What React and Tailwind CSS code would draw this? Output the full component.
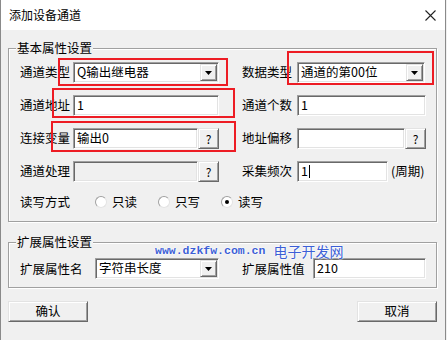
import React from "react";

const sunken =
  "border border-t-[#a0a0a0] border-l-[#a0a0a0] border-r-white border-b-white shadow-[inset_1px_1px_0_#696969,inset_-1px_-1px_0_#e3e3e3]";
const raised =
  "border border-t-[#e3e3e3] border-l-[#e3e3e3] border-r-[#696969] border-b-[#696969] shadow-[inset_1px_1px_0_white,inset_-1px_-1px_0_#a0a0a0] bg-[#f0f0f0]";

function Input({ className = "", value = "", disabled = false, caret = false }) {
  return (
    <div
      className={`h-[21px] flex items-center pl-[3px] ${sunken} ${
        disabled ? "bg-[#f0f0f0]" : "bg-white"
      } ${className}`}
    >
      <span className="leading-none">{value}</span>
      {caret && <span className="w-[1px] h-[13px] bg-black ml-[1px]" />}
    </div>
  );
}

function Combo({ className = "", value }) {
  return (
    <div
      className={`h-[21px] flex items-center justify-between pl-[3px] pr-[1px] bg-white ${sunken} ${className}`}
    >
      <span className="leading-none">{value}</span>
      <div className={`w-[17px] h-[17px] flex items-center justify-center ${raised}`}>
        <svg width="7" height="4" viewBox="0 0 7 4">
          <path d="M0 0h7L3.5 4z" fill="#000" />
        </svg>
      </div>
    </div>
  );
}

function QButton() {
  return (
    <div className={`w-[21px] h-[21px] flex items-center justify-center text-[12px] ${raised}`}>
      ?
    </div>
  );
}

function Radio({ label, checked }) {
  return (
    <div className="w-[63px] flex items-center">
      <div className="w-[12px] h-[12px] rounded-full bg-white border border-[#a0a0a0] border-r-[#e3e3e3] border-b-[#e3e3e3] flex items-center justify-center mr-[5px]">
        {checked && <div className="w-[4px] h-[4px] rounded-full bg-black" />}
      </div>
      <span>{label}</span>
    </div>
  );
}

function Group({ title, className = "", children }) {
  return (
    <div
      className={`border border-[#a0a0a0] shadow-[1px_1px_0_white,inset_1px_1px_0_white] ${className}`}
    >
      <div className="-mt-[9px] ml-[7px] px-[1px] w-fit bg-[#f0f0f0] leading-[16px]">
        {title}
      </div>
      {children}
    </div>
  );
}

function Mark({ left, top, w, h }) {
  return (
    <div
      className="absolute border-2 border-[#ed1c24]"
      style={{ left, top, width: w, height: h }}
    />
  );
}

export default function App() {
  return (
    <div className="w-[447px] h-[340px] bg-[#f0f0f0] relative overflow-hidden text-[12.5px] text-black font-['SimSun','Noto_Sans_CJK_SC',sans-serif]">
      <div className="w-[446px] h-full border-x border-[#8a8a8a] flex flex-col">
        {/* title bar */}
        <div className="h-[30px] bg-white flex items-center justify-between pl-[8px] pr-[9px] text-[12px]">
          <span>添加设备通道</span>
          <svg width="11" height="11" viewBox="0 0 11 11">
            <path d="M0.5 0.5l10 10M10.5 0.5l-10 10" stroke="#222" strokeWidth="1.1" />
          </svg>
        </div>

        <div className="flex-1 pl-[7px] pr-[8px] pt-[18px]">
          <Group title="基本属性设置" className="h-[174px]">
            <div className="flex items-center pl-[11px] mt-[6px]">
              <span className="w-[53px]">通道类型</span>
              <Combo className="w-[146px]" value="Q输出继电器" />
              <span className="w-[55px] ml-[23px]">数据类型</span>
              <Combo className="w-[128px]" value="通道的第00位" />
            </div>
            <div className="flex items-center pl-[11px] mt-[12px]">
              <span className="w-[53px]">通道地址</span>
              <Input className="w-[146px]" value="1" />
              <span className="w-[55px] ml-[23px]">通道个数</span>
              <Input className="w-[129px]" value="1" />
            </div>
            <div className="flex items-center pl-[11px] mt-[12px]">
              <span className="w-[53px]">连接变量</span>
              <Input className="w-[125px]" value="输出0" />
              <QButton />
              <span className="w-[55px] ml-[23px]">地址偏移</span>
              <Input className="w-[108px]" />
              <QButton />
            </div>
            <div className="flex items-center pl-[11px] mt-[12px]">
              <span className="w-[53px]">通道处理</span>
              <Input className="w-[125px]" disabled />
              <QButton />
              <span className="w-[55px] ml-[23px]">采集频次</span>
              <Input className="w-[91px]" value="1" caret />
              <span className="ml-[3px]">(周期)</span>
            </div>
            <div className="flex items-center pl-[11px] mt-[10px] h-[20px]">
              <span className="w-[75px]">读写方式</span>
              <Radio label="只读" />
              <Radio label="只写" />
              <Radio label="读写" checked />
            </div>
          </Group>

          <Group title="扩展属性设置" className="h-[46px] mt-[20px]">
            <div className="flex items-center pl-[11px] mt-[8px]">
              <span className="w-[75px] leading-[15px]">扩展属性名</span>
              <Combo className="w-[124px]" value="字符串长度" />
              <span className="w-[71px] ml-[23px] leading-[15px]">扩展属性值</span>
              <Input className="w-[113px]" value="210" />
            </div>
          </Group>

          <div className="flex justify-between mt-[13px]">
            <div className={`w-[80px] h-[21px] flex items-center justify-center ${raised}`}>
              确认
            </div>
            <div className={`w-[80px] h-[21px] flex items-center justify-center ${raised}`}>
              取消
            </div>
          </div>
        </div>
      </div>

      {/* annotation marks */}
      <Mark left={58} top={58} w={170} h={28} />
      <Mark left={52} top={88} w={183} h={30} />
      <Mark left={51} top={121} w={185} h={31} />
      <Mark left={287} top={51} w={147} h={34} />

      {/* watermark */}
      <div className="absolute left-[155px] top-[244px] flex items-center leading-none text-[#3c5fd6] [text-shadow:0_0_2px_white,0_0_2px_white,0_0_1px_white]">
        <span className="font-['Liberation_Mono',monospace] font-bold text-[11.5px] leading-none">
          www.dzkfw.com.cn
        </span>
        <span className="ml-[8px] text-[14px] leading-none font-['Noto_Sans_CJK_SC',sans-serif]">
          电子开发网
        </span>
      </div>
    </div>
  );
}
